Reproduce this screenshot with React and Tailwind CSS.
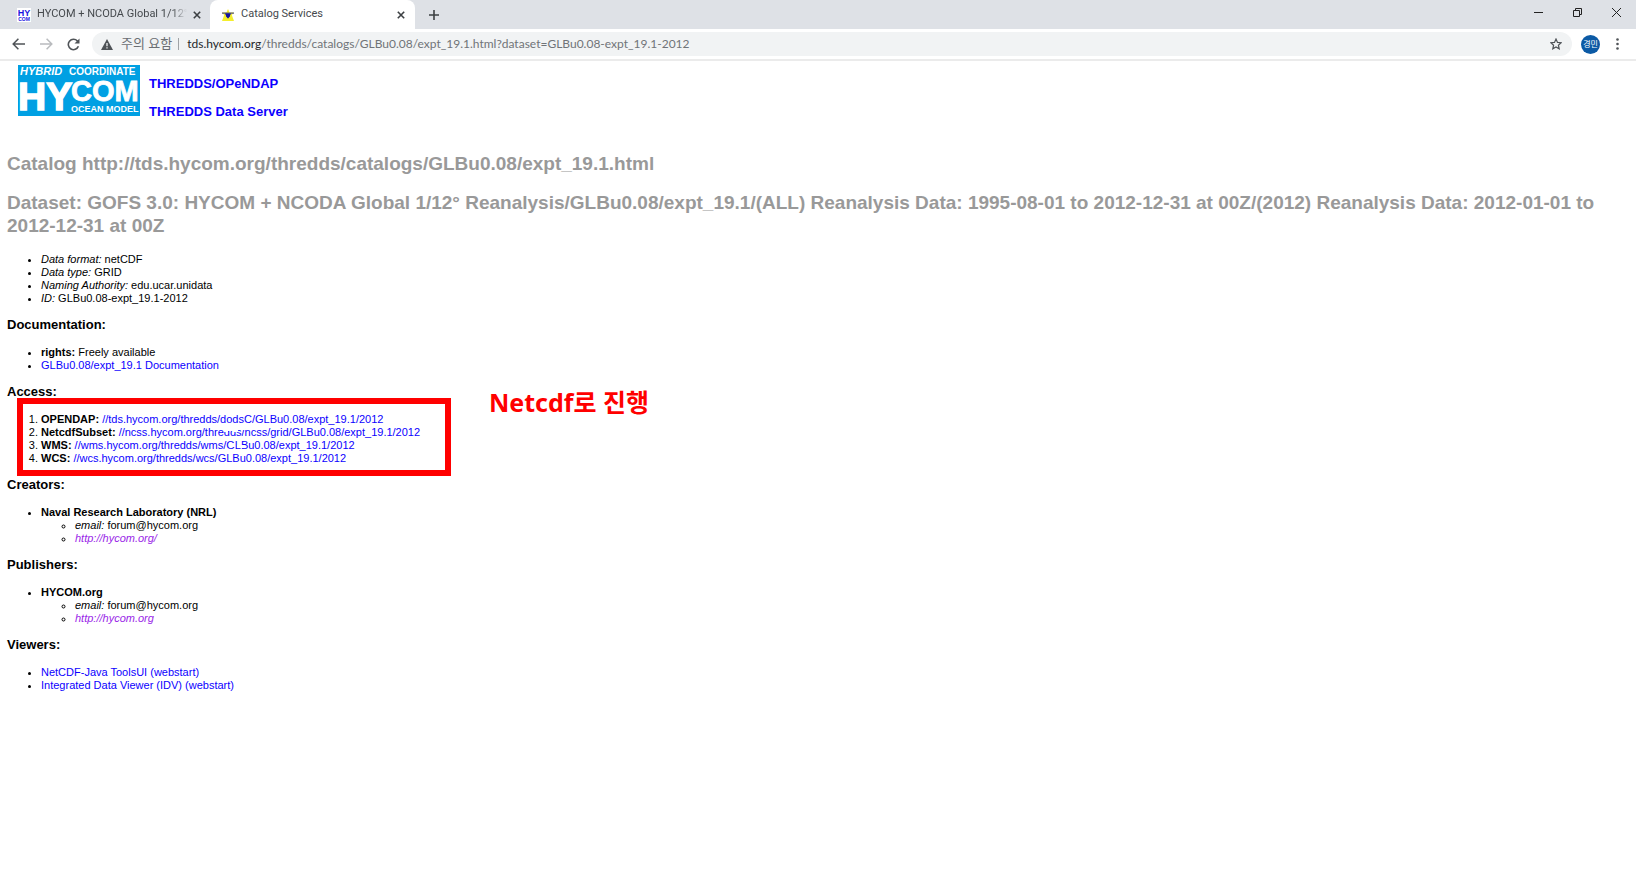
import React from "react";

const ui = "font-['Lato','Noto_Sans_CJK_KR',sans-serif]";

function CloseIcon() {
  return (
    <svg viewBox="0 0 8 8" className="size-2" fill="none" stroke="#3c4043" strokeWidth="1.6">
      <path d="M.8.8l6.4 6.4M7.2.8L.8 7.2" />
    </svg>
  );
}

function TabStrip() {
  return (
    <div className="flex h-[29px] items-stretch bg-[#dee1e6] font-['Roboto',sans-serif] text-[11px] text-[#45494d]">
      <div className="flex w-[210px] shrink-0 items-center pl-[17px] pr-2">
        <svg viewBox="0 0 14 14" className="size-[14px] shrink-0">
          <rect width="14" height="14" fill="#fff" />
          <text x="7" y="7.6" fontSize="9" fontWeight="700" textAnchor="middle" fill="#1a12e0" fontFamily="Liberation Sans">HY</text>
          <text x="7" y="13.2" fontSize="5" fontWeight="700" textAnchor="middle" fill="#1a12e0" fontFamily="Liberation Sans">COM</text>
        </svg>
        <span className="ml-1.5 w-[150px] overflow-hidden whitespace-nowrap mask-r-from-90%">HYCOM + NCODA Global 1/12°</span>
        <button aria-label="Close tab" className="ml-1.5"><CloseIcon /></button>
      </div>
      <div className="flex w-[205px] shrink-0 items-center rounded-t-lg bg-white pl-3 pr-[10px]">
        <svg viewBox="0 0 12 12" className="size-3 shrink-0">
          <path d="M6 0l1.600 3.400H12L9.800 6l2.200 6H0l2.200-6L0 3.400h4.400z" fill="#f4ee2c" />
          <path d="M0 3.400h12v1.400H9L6 9.600 3 4.800H0z" fill="#5a5a80" />
          <path d="M3.400 4.600h5.200L7.800 7.400 6 9.600 4.200 7.400z" fill="#14149c" />
        </svg>
        <span className="ml-[7px] flex-1">Catalog Services</span>
        <button aria-label="Close tab"><CloseIcon /></button>
      </div>
      <button aria-label="New tab" className="ml-[14px]">
        <svg viewBox="0 0 10 10" className="size-[10px]" stroke="#3c4043" strokeWidth="1.6"><path d="M5 0v10M0 5h10" /></svg>
      </button>
      <div className="ml-auto flex items-center gap-[30px] pr-[15px] pb-1">
        <button aria-label="Minimize">
          <svg viewBox="0 0 9 9" className="size-[9px]" stroke="#222" strokeWidth="1"><path d="M0 4.500h9" /></svg>
        </button>
        <button aria-label="Restore">
          <svg viewBox="0 0 9 9" className="size-[9px]" fill="none" stroke="#222" strokeWidth="1"><path d="M.5 2.500h6v6h-6zM2.500 2.500v-2h6v6h-2" /></svg>
        </button>
        <button aria-label="Close window">
          <svg viewBox="0 0 9 9" className="size-[9px]" stroke="#222" strokeWidth="1"><path d="M0 0l9 9M9 0L0 9" /></svg>
        </button>
      </div>
    </div>
  );
}

function Toolbar() {
  return (
    <div className="flex h-8 items-center border-b-2 border-[#ebebeb] bg-white pl-3 pr-[17px]">
      <button aria-label="Back">
        <svg viewBox="0 0 13 12" className="h-3 w-[13px]" fill="none" stroke="#4f5357" strokeWidth="1.500"><path d="M13 6H1.200M6.400.8L1.200 6l5.200 5.200" /></svg>
      </button>
      <button aria-label="Forward" className="ml-[15px]">
        <svg viewBox="0 0 13 12" className="h-3 w-[13px]" fill="none" stroke="#b9bbbe" strokeWidth="1.500"><path d="M0 6h11.800M6.600.8L11.800 6l-5.200 5.200" /></svg>
      </button>
      <button aria-label="Reload" className="ml-[14px]">
        <svg viewBox="0 0 13 13" className="size-[13px]" fill="none" stroke="#4f5357" strokeWidth="1.600"><path d="M11.400 8.300A5.200 5.200 0 1 1 10.400 3L11.300 4" /><path d="M12.500.5v5h-5z" fill="#4f5357" stroke="none" /></svg>
      </button>
      <div className="ml-3 flex h-6 flex-1 items-center rounded-full bg-[#f1f3f4] pl-[9px] pr-[10px] text-xs">
        <svg viewBox="0 0 12 11" className="h-[11px] w-3 shrink-0"><path d="M6 0l6 11H0z" fill="#4f5357" /><path d="M5.400 4h1.200v3.200H5.400zM5.400 8.200h1.200v1.200H5.400z" fill="#fff" /></svg>
        <span className="ml-2 whitespace-nowrap text-[13px] text-[#6b6f73]">주의 요함</span>
        <span className="ml-[6px] h-3 w-px bg-[#a0a3a6]" />
        <div className="ml-2 flex-1 whitespace-nowrap text-[#707478]">
          <span className="text-[#25282b]">tds.hycom.org</span>/thredds/catalogs/GLBu0.08/expt_19.1.html?dataset=GLBu0.08-expt_19.1-2012
        </div>
        <button aria-label="Bookmark">
          <svg viewBox="0 0 12 12" className="size-3" fill="none" stroke="#4f5357" strokeWidth="1.200"><path d="M6 1l1.500 3.400 3.700.3-2.800 2.500.8 3.600L6 8.900l-3.200 1.900.8-3.600L.8 4.700l3.700-.3z" /></svg>
        </button>
      </div>
      <button aria-label="Profile" className="ml-[9px] flex size-[19px] items-center justify-center rounded-full bg-[#0b5aa5] text-[8px] text-white">경민</button>
      <button aria-label="Menu" className="ml-[16px]">
        <svg viewBox="0 0 3 12" className="h-3 w-[3px]" fill="#4f5357"><circle cx="1.500" cy="1.500" r="1.300" /><circle cx="1.500" cy="6" r="1.300" /><circle cx="1.500" cy="10.500" r="1.300" /></svg>
      </button>
    </div>
  );
}

function Logo() {
  return (
    <svg viewBox="0 0 122 51" className="h-[51px] w-[122px] shrink-0" fontFamily="Liberation Sans" fontWeight="700" fill="#fff">
      <rect width="122" height="51" fill="#00a0e3" />
      <text x="2" y="10" fontSize="11" fontStyle="italic">HYBRID</text>
      <text x="51" y="10" fontSize="10">COORDINATE</text>
      <text x="0" y="45" fontSize="39" stroke="#fff" strokeWidth="1.500">HY</text>
      <text x="53" y="36" fontSize="29" stroke="#fff" strokeWidth="0.800">COM</text>
      <text x="53" y="47" fontSize="9">OCEAN MODEL</text>
    </svg>
  );
}

function Heading({ children }) {
  return <h3 className="mt-3 mb-[13px] text-[13px] leading-4 font-bold">{children}</h3>;
}

function Link({ children, visited }) {
  return <a href="#" className={visited ? "text-[#9a1fe8] italic" : "text-[#0c00ff]"}>{children}</a>;
}

const access = [
  ["OPENDAP:", "//tds.hycom.org/thredds/dodsC/GLBu0.08/expt_19.1/2012"],
  ["NetcdfSubset:", "//ncss.hycom.org/thredds/ncss/grid/GLBu0.08/expt_19.1/2012"],
  ["WMS:", "//wms.hycom.org/thredds/wms/GLBu0.08/expt_19.1/2012"],
  ["WCS:", "//wcs.hycom.org/thredds/wcs/GLBu0.08/expt_19.1/2012"],
];

function Contact({ name, url }) {
  return (
    <ul className="list-disc pl-[34px]">
      <li>
        <b>{name}</b>
        <ul className="list-[circle] pl-[34px]">
          <li><i>email:</i> forum@hycom.org</li>
          <li><Link visited>{url}</Link></li>
        </ul>
      </li>
    </ul>
  );
}

export default function App() {
  return (
    <div className="min-h-screen bg-white">
      <header className={ui}>
        <TabStrip />
        <Toolbar />
      </header>
      <main className="px-[7px] pt-1 font-['Liberation_Sans',sans-serif] text-[11px] leading-[13px] text-black">
        <div className="flex gap-[9px] pl-[11px] text-[13px] leading-4 font-bold text-[#0c00ff]">
          <Logo />
          <div className="flex flex-col gap-3 pt-[11px]">
            <a href="#">THREDDS/OPeNDAP</a>
            <a href="#">THREDDS Data Server</a>
          </div>
        </div>
        <h1 className="mt-8 text-[19px] leading-[23px] font-bold text-[#999]">Catalog http://tds.hycom.org/thredds/catalogs/GLBu0.08/expt_19.1.html</h1>
        <h2 className="my-4 text-[19px] leading-[23px] font-bold text-[#999]">
          Dataset: GOFS 3.0: HYCOM + NCODA Global 1/12° Reanalysis/GLBu0.08/expt_19.1/(ALL) Reanalysis Data: 1995-08-01 to 2012-12-31 at 00Z/(2012) Reanalysis Data: 2012-01-01 to <span className="whitespace-nowrap">2012-12-31</span> at 00Z
        </h2>
        <ul className="list-disc pl-[34px]">
          <li><i>Data format:</i> netCDF</li>
          <li><i>Data type:</i> GRID</li>
          <li><i>Naming Authority:</i> edu.ucar.unidata</li>
          <li><i>ID:</i> GLBu0.08-expt_19.1-2012</li>
        </ul>
        <Heading>Documentation:</Heading>
        <ul className="list-disc pl-[34px]">
          <li><b>rights:</b> Freely available</li>
          <li><Link>GLBu0.08/expt_19.1 Documentation</Link></li>
        </ul>
        <Heading>Access:</Heading>
        <div className="relative">
          <ol className="list-decimal pl-[34px]">
            {access.map(([name, url]) => (
              <li key={name}><b>{name}</b> <Link>{url}</Link></li>
            ))}
          </ol>
          <svg viewBox="0 0 24 24" className="pointer-events-none absolute top-[14px] left-[216px] size-6" fill="#fff">
            <path d="M1 0h4v5H1zM5 0h5v4H5zM10 0h5v5h-5zM15 0h7v3h-7zM6 17h6v3H6zM14 18h8v3h-8z" />
          </svg>
          <div className="pointer-events-none absolute -top-[15px] left-[10px] h-[78px] w-[434px] border-6 border-[#f00]" />
          <p className="absolute -top-[29px] left-[482px] font-['Noto_Sans','Noto_Sans_CJK_KR',sans-serif] text-[25px] leading-9 font-bold whitespace-nowrap text-[#f00]">Netcdf로 진행</p>
        </div>
        <Heading>Creators:</Heading>
        <Contact name="Naval Research Laboratory (NRL)" url="http://hycom.org/" />
        <Heading>Publishers:</Heading>
        <Contact name="HYCOM.org" url="http://hycom.org" />
        <Heading>Viewers:</Heading>
        <ul className="list-disc pl-[34px]">
          <li><Link>NetCDF-Java ToolsUI (webstart)</Link></li>
          <li><Link>Integrated Data Viewer (IDV) (webstart)</Link></li>
        </ul>
      </main>
    </div>
  );
}
